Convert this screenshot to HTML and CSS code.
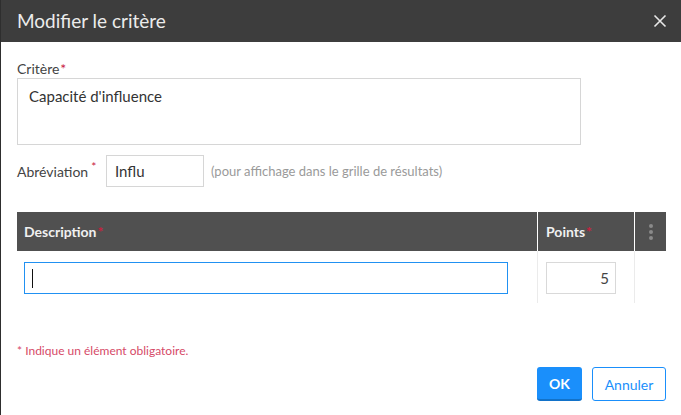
FILE: index.html
```html
<!DOCTYPE html>
<html lang="fr">
<head>
<meta charset="utf-8">
<link rel="stylesheet" href="styles.css">
</head>
<body>
<div class="dialog">
  <div class="header">
    <div class="title">Modifier le critère</div>
    <svg class="close" width="14" height="14" viewBox="0 0 14 14"><path d="M1.5 1.5 L12.5 12.5 M12.5 1.5 L1.5 12.5" stroke="#e8e8e8" stroke-width="1.6" fill="none"/></svg>
  </div>
  <div class="body">
    <div class="label">Critère<span class="req">*</span></div>
    <div class="textarea">Capacité d'influence</div>
    <div class="abbr-row">
      <div class="abbr-label">Abréviation<span class="req sup">*</span></div>
      <div class="abbr-input">Influ</div>
      <div class="hint">(pour affichage dans le grille de résultats)</div>
    </div>
    <div class="table">
      <div class="thead">
        <div class="th desc">Description<span class="req">*</span></div>
        <div class="th pts">Points<span class="req">*</span></div>
        <div class="th menu">
          <svg width="6" height="18" viewBox="0 0 6 18"><circle cx="3" cy="3" r="2" fill="#8a8a8a"/><circle cx="3" cy="9" r="2" fill="#8a8a8a"/><circle cx="3" cy="15" r="2" fill="#8a8a8a"/></svg>
        </div>
      </div>
      <div class="trow">
        <div class="td desc"><div class="desc-input"><span class="caret"></span></div></div>
        <div class="td pts"><div class="pts-input">5</div></div>
        <div class="td menu"></div>
      </div>
    </div>
    <div class="note">* Indique un élément obligatoire.</div>
    <div class="actions">
      <button class="btn ok">OK</button>
      <button class="btn cancel">Annuler</button>
    </div>
  </div>
</div>
</body>
</html>
```

FILE: styles.css
```css
html, body {
  margin: 0;
  padding: 0;
  background: #2e2e2e;
  font-family: Lato, "Open Sans", sans-serif;
}
.dialog {
  margin-left: 1px;
  width: 680px;
  height: 415px;
  background: #fff;
  display: flex;
  flex-direction: column;
}
.header {
  height: 42px;
  background: #3d3d3d;
  display: flex;
  align-items: center;
  justify-content: space-between;
  padding: 0 14px 0 16px;
}
.title {
  color: #ececec;
  font-size: 19px;
  margin-top: -1px;
}
.close {
  display: block;
}
.body {
  padding: 0 14px 0 16px;
  display: flex;
  flex-direction: column;
}
.label {
  margin-top: 18px;
  font-size: 14px;
  color: #444;
  line-height: 18px;
}
.req {
  color: #c8203f;
  margin-left: 1px;
}
.sup {
  position: relative;
  top: -6px;
  font-size: 12px;
  margin-left: 3px;
}
.textarea {
  width: 564px;
  height: 67px;
  border: 1px solid #d6d6d6;
  font-size: 15px;
  color: #333;
  padding: 8px 11px;
  box-sizing: border-box;
  line-height: 18px;
}
.abbr-row {
  margin-top: 10px;
  display: flex;
  align-items: center;
}
.abbr-label {
  font-size: 14px;
  color: #444;
  width: 89px;
}
.abbr-input {
  width: 98px;
  height: 32px;
  box-sizing: border-box;
  border: 1px solid #d6d6d6;
  font-size: 15px;
  color: #333;
  padding: 0 8px;
  line-height: 30px;
}
.hint {
  margin-left: 7px;
  font-size: 13px;
  color: #9a9a9a;
}
.table {
  margin-top: 25px;
  width: 649px;
}
.thead {
  display: flex;
  height: 39px;
  background: #505050;
}
.th {
  color: #f0f0f0;
  font-weight: bold;
  font-size: 14px;
  display: flex;
  align-items: center;
  box-sizing: border-box;
}
.desc { width: 520px; padding-left: 7px; }
.pts { width: 97px; border-left: 1px solid #fff; padding-left: 8px; }
.menu { width: 32px; border-left: 1px solid #fff; justify-content: center; }
.trow {
  display: flex;
  height: 52px;
}
.td {
  box-sizing: border-box;
  padding-top: 11px;
}
.td.pts, .td.menu { border-left: 1px solid #ebebeb; }
.desc-input {
  width: 484px;
  height: 32px;
  box-sizing: border-box;
  border: 1px solid #2191f2;
  display: flex;
  align-items: center;
  padding-left: 7px;
}
.caret {
  display: block;
  width: 1px;
  height: 19px;
  background: #111;
}
.pts-input {
  width: 70px;
  height: 32px;
  box-sizing: border-box;
  border: 1px solid #d9d9d9;
  font-size: 15px;
  color: #444;
  text-align: right;
  padding-right: 6px;
  line-height: 30px;
}
.note {
  margin-top: 40px;
  font-size: 12px;
  color: #d64a68;
}
.actions {
  margin-top: 9px;
  display: flex;
  justify-content: flex-end;
  gap: 10px;
  width: 649px;
}
.btn {
  font-family: Lato, "Open Sans", sans-serif;
  font-size: 14px;
  height: 34px;
  box-sizing: border-box;
  border-radius: 3px;
  cursor: pointer;
}
.ok {
  width: 45px;
  background: #1a8ffb;
  color: #fff;
  font-weight: bold;
  border: none;
  border-bottom: 2px solid #1272c9;
}
.cancel {
  width: 74px;
  background: #fff;
  color: #1a8ffb;
  border: 1px solid #1a8ffb;
}
```
